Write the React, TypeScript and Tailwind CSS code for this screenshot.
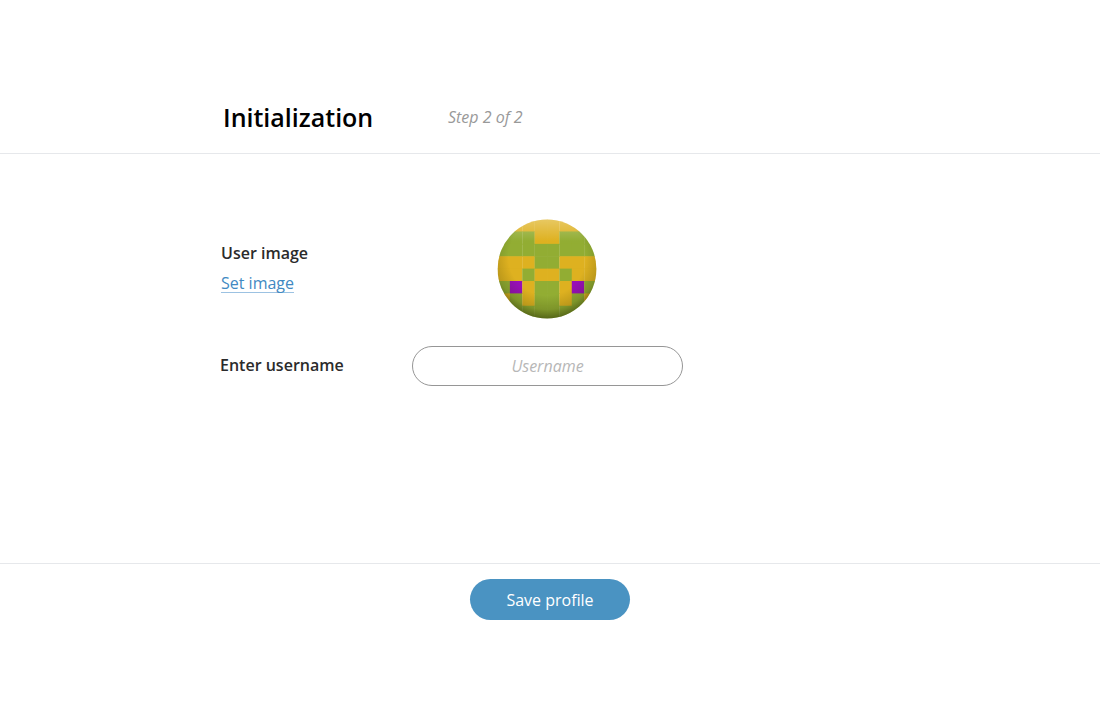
const ROWS = [
  "yyyyyyyy",
  "gggyyggg",
  "gggggggg",
  "yyyggyyy",
  "yygyygyy",
  "gpyggypg",
  "ygyggygy",
  "gggggggg",
];

const COLORS: Record<string, string> = { y: "#deb120", g: "#92ad33", p: "#980fb8" };

function Avatar() {
  return (
    <svg className="block size-[100px]" viewBox="0 0 100 100" aria-label="User image">
      <defs>
        <clipPath id="disc">
          <circle cx="50" cy="50" r="49.4" />
        </clipPath>
        <radialGradient id="rim" cx="50" cy="38" r="64" gradientUnits="userSpaceOnUse">
          <stop offset="0.6" stopColor="#202800" stopOpacity="0" />
          <stop offset="0.82" stopColor="#202800" stopOpacity="0.18" />
          <stop offset="1" stopColor="#202800" stopOpacity="0.62" />
        </radialGradient>
        <linearGradient id="shine" x1="0" y1="0" x2="0" y2="1">
          <stop offset="0" stopColor="#fff" stopOpacity="0.3" />
          <stop offset="0.22" stopColor="#fff" stopOpacity="0" />
        </linearGradient>
      </defs>
      <g clipPath="url(#disc)">
        {ROWS.map((row, y) =>
          row.split("").map((c, x) => (
            <rect key={`${x}-${y}`} x={0.5 + x * 12.38} y={0.1 + y * 12.38} width="12.6" height="13" fill={COLORS[c]} />
          ))
        )}
        <rect width="100" height="100" fill="url(#rim)" />
        <rect width="100" height="100" fill="url(#shine)" />
      </g>
    </svg>
  );
}

export default function App() {
  return (
    <div className="flex h-[711px] flex-col bg-white font-['Open_Sans',sans-serif] text-base leading-6">
      <header className="flex h-[154px] items-end border-b border-[#e6e8eb] pb-[18px] pl-[223px]">
        <h1 className="w-[225px] text-[25px] leading-9 font-semibold text-black">Initialization</h1>
        <span className="pb-1.5 text-[#999999] italic">Step 2 of 2</span>
      </header>
      <main className="h-[410px] border-b border-[#e6e8eb] pt-[65px] pl-[220px]">
        <div className="flex">
          <div className="w-[277px] pt-[22px] pl-px">
            <div className="font-semibold text-[#2b2b2b]">User image</div>
            <a href="#" className="mt-[9px] inline-block h-[19px] border-b border-[#9cc2e2] leading-[18px] text-[#4189c2]">
              Set image
            </a>
          </div>
          <Avatar />
        </div>
        <label className="mt-[27px] flex items-center">
          <span className="w-[192px] pb-0.5 font-semibold text-[#2b2b2b]">Enter username</span>
          <input
            placeholder="Username"
            className="h-10 w-[271px] rounded-full border border-[#969696] bg-white text-center italic outline-none placeholder:text-[#b7b7b7]"
          />
        </label>
      </main>
      <footer className="flex justify-center pt-[15px]">
        <button className="h-[41px] w-40 rounded-full bg-[#4a93c2] text-white">Save profile</button>
      </footer>
    </div>
  );
}
